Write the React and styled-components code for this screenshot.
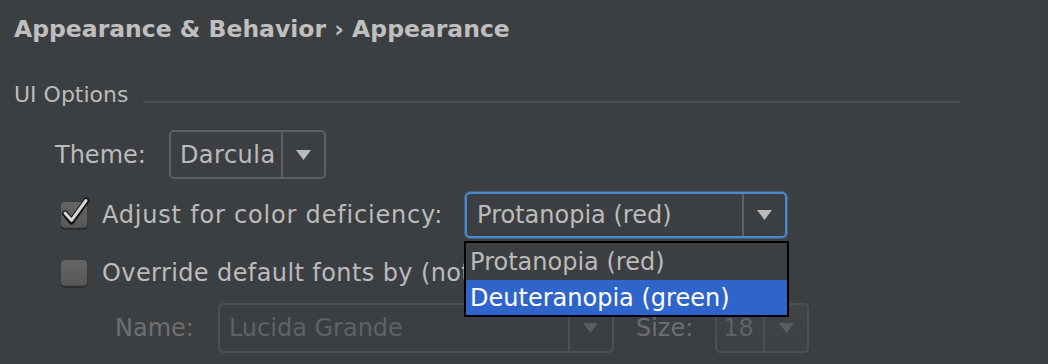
import React from "react";
import styled, { createGlobalStyle } from "styled-components";

const Global = createGlobalStyle`
  html, body { margin: 0; padding: 0; background: #3c3f41; }
  body { width: 1048px; height: 364px; overflow: hidden; font-family: "DejaVu Sans", "Liberation Sans", sans-serif; }
`;

const Page = styled.div`
  width: 1048px;
  height: 364px;
  box-sizing: border-box;
  background: #3c3f41;
  padding: 14px 0 0 14px;
  display: flex;
  flex-direction: column;
  color: #bbbbbb;
  font-size: 24px;
`;

const Title = styled.h1`
  margin: 0;
  font-size: 23.5px;
  line-height: 30px;
  font-weight: bold;
  color: #bfbfbf;
`;

const SectionHeader = styled.div`
  display: flex;
  align-items: center;
  margin-top: 36px;
  height: 30px;
`;

const SectionLabel = styled.span`
  font-size: 22px;
  line-height: 30px;
  color: #bbbbbb;
`;

const Rule = styled.div`
  width: 817px;
  height: 2px;
  background: #4c4e50;
  margin-left: 15px;
  margin-top: 14px;
`;

const Row = styled.div`
  display: flex;
  align-items: center;
  height: ${(p) => p.$h}px;
  margin-top: ${(p) => p.$top}px;
  padding-left: ${(p) => p.$indent}px;
`;

const Label = styled.span`
  font-size: 24px;
  line-height: 30px;
  white-space: nowrap;
  letter-spacing: ${(p) => p.$ls ?? 0}px;
  color: ${(p) => (p.$disabled ? "#6c6e70" : "#bbbbbb")};
  margin-right: ${(p) => p.$gap ?? 23}px;
  margin-left: ${(p) => p.$left ?? 0}px;
`;

const ComboWrap = styled.div`
  position: relative;
  display: flex;
`;

const Combo = styled.div`
  box-sizing: border-box;
  display: flex;
  align-items: stretch;
  width: ${(p) => p.$w}px;
  height: ${(p) => p.$h}px;
  border-radius: 5px;
  border: ${(p) => (p.$focused ? "2px solid #4a8bd0" : p.$disabled ? "2px solid #4d5052" : "2px solid #5d6062")};
  box-shadow: ${(p) => (p.$focused ? "0 0 0 1px rgba(74,139,208,0.45)" : "none")};
  background: ${(p) => (p.$tint ? "linear-gradient(#414446, #3e4143)" : "transparent")};
`;

const ComboText = styled.div`
  flex: 1;
  display: flex;
  align-items: center;
  padding-left: ${(p) => p.$pad ?? 9}px;
  font-size: 24px;
  letter-spacing: ${(p) => p.$ls ?? 0}px;
  white-space: nowrap;
  overflow: hidden;
  color: ${(p) => (p.$disabled ? "#5f6264" : "#bbbbbb")};
`;

const ArrowCell = styled.div`
  width: ${(p) => p.$w ?? 41}px;
  display: flex;
  align-items: center;
  justify-content: center;
  border-left: 2px solid ${(p) => (p.$disabled ? "#4d5052" : "#5d6062")};
  svg { display: block; }
`;

const Popup = styled.div`
  position: absolute;
  left: -1px;
  top: calc(100% + 3px);
  width: 325px;
  box-sizing: border-box;
  border: 2px solid #000;
  background: #3c3f41;
  z-index: 10;
`;

const Item = styled.div`
  height: ${(p) => p.$h}px;
  display: flex;
  align-items: center;
  padding-left: 4px;
  font-size: 24px;
  white-space: nowrap;
  color: ${(p) => (p.$selected ? "#ffffff" : "#bbbbbb")};
  background: ${(p) => (p.$selected ? "#2f65ca" : "transparent")};
`;

const CheckSvg = styled.svg`
  display: block;
  flex: none;
  margin-right: 13px;
  overflow: visible;
`;

function Arrow({ color = "#bbbbbb" }) {
  return (
    <svg width="15" height="10" viewBox="0 0 15 10">
      <polygon points="0,0 15,0 7.5,10" fill={color} />
    </svg>
  );
}

function Checkbox({ checked }) {
  const id = checked ? "cbg1" : "cbg2";
  return (
    <CheckSvg width="30" height="30" viewBox="0 0 30 30">
      <defs>
        <linearGradient id={id} x1="0" y1="0" x2="0" y2="1">
          <stop offset="0" stopColor="#646566" />
          <stop offset="1" stopColor="#56585a" />
        </linearGradient>
      </defs>
      <rect x="1" y="2" width="28" height="28" rx="5" fill="#2b2c2d" />
      <rect x="1" y="1" width="28" height="27.5" rx="5" fill="#3a3b3c" />
      <rect x="2" y="2" width="26" height="25.5" rx="4" fill={`url(#${id})`} />
      {checked && (
        <>
          <path d="M6 13.5 L12.5 21.5 L27.5 0.5" fill="none" stroke="#141414" strokeWidth="6" strokeLinecap="round" strokeLinejoin="round" />
          <path d="M6 13 L12.5 20.3 L27 0.5" fill="none" stroke="#d8d8d8" strokeWidth="3" strokeLinecap="round" strokeLinejoin="round" />
        </>
      )}
    </CheckSvg>
  );
}

export default function App() {
  return (
    <>
      <Global />
      <Page>
        <Title>Appearance &amp; Behavior › Appearance</Title>
        <SectionHeader>
          <SectionLabel>UI Options</SectionLabel>
          <Rule />
        </SectionHeader>

        <Row $h={49} $top={20} $indent={41}>
          <Label>Theme:</Label>
          <Combo $w={157} $h={49}>
            <ComboText $ls={0.5}>Darcula</ComboText>
            <ArrowCell>
              <Arrow />
            </ArrowCell>
          </Combo>
        </Row>

        <Row $h={48} $top={12} $indent={45}>
          <Checkbox checked />
          <Label $gap={22} $ls={0.8}>Adjust for color deficiency:</Label>
          <ComboWrap>
            <Combo $w={322} $h={46} $focused>
              <ComboText $pad={10}>Protanopia (red)</ComboText>
              <ArrowCell $w={41}>
                <Arrow />
              </ArrowCell>
            </Combo>
            <Popup>
              <Item $h={37}>Protanopia (red)</Item>
              <Item $h={35} $selected>Deuteranopia (green)</Item>
            </Popup>
          </ComboWrap>
        </Row>

        <Row $h={48} $top={10} $indent={45}>
          <Checkbox />
          <Label $ls={0.4}>Override default fonts by (not recommended):</Label>
        </Row>

        <Row $h={50} $top={6} $indent={101}>
          <Label $disabled $gap={24}>Name:</Label>
          <Combo $w={396} $h={50} $disabled>
            <ComboText $disabled $pad={9}>Lucida Grande</ComboText>
            <ArrowCell $disabled $w={42}>
              <Arrow color="#5a5d5f" />
            </ArrowCell>
          </Combo>
          <Label $disabled $left={22} $gap={22}>Size:</Label>
          <Combo $w={94} $h={50} $disabled $tint>
            <ComboText $disabled $pad={6}>18</ComboText>
            <ArrowCell $disabled $w={42}>
              <Arrow color="#5a5d5f" />
            </ArrowCell>
          </Combo>
        </Row>
      </Page>
    </>
  );
}
